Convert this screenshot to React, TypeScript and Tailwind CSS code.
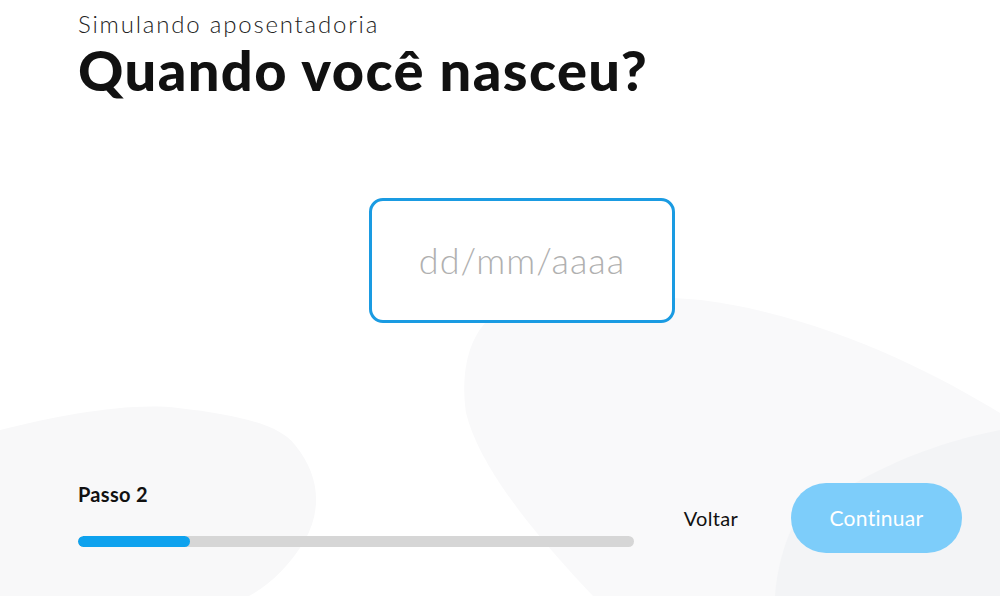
import React from "react";

export default function App() {
  return (
    <div className="relative w-[1000px] h-[596px] overflow-hidden bg-white" style={{ fontFamily: "Lato, 'Open Sans', sans-serif" }}>
      <svg className="absolute inset-0 w-[1000px] h-[596px]" viewBox="0 0 1000 596" aria-hidden="true">
        <path d="M485 323 C 520 300, 600 290, 701 300 C 820 315, 930 370, 1000 413 L 1000 596 L 593 596 C 540 540, 480 470, 466 413 C 460 370, 470 340, 485 323 Z" fill="#f9f9fa" />
        <path d="M0 430 C 60 415, 130 402, 178 408 C 240 415, 280 425, 295 445 C 320 475, 322 510, 305 540 C 290 565, 270 585, 249 596 L 0 596 Z" fill="#f8f8f9" />
        <path d="M1000 430 C 950 440, 910 455, 880 470 C 830 495, 800 515, 791 530 C 780 555, 776 580, 775 596 L 1000 596 Z" fill="#f3f4f6" />
      </svg>
      <div className="relative flex flex-col h-full">
        <div className="pl-[78px] pt-[10px]">
          <div className="text-[24px] leading-[28px] font-light text-[#222] tracking-[1.8px]">Simulando aposentadoria</div>
          <h1 className="mt-[1px] text-[56px] leading-[62px] font-black text-[#111] tracking-[1.4px]">Quando você nasceu?</h1>
        </div>
        <div className="flex mt-[97px] pl-[369px]">
          <div className="w-[306px] h-[125px] border-[3px] border-[#1a9be2] rounded-[14px] bg-white flex items-center justify-center">
            <span className="text-[36px] font-light text-[#b0b0b0] tracking-[1px] mt-[-1px]">dd/mm/aaaa</span>
          </div>
        </div>
        <div className="flex items-end pl-[78px] pr-[38px] mt-[159px]">
          <div className="flex flex-col w-[556px]">
            <div className="text-[20px] font-bold text-[#111] leading-[24px] tracking-[0.3px]">Passo 2</div>
            <div className="mt-[30px] h-[11px] rounded-full bg-[#d6d6d6] overflow-hidden">
              <div className="h-full w-[112px] rounded-full bg-[#0ea2ee]" />
            </div>
          </div>
          <div className="flex items-center ml-auto mb-[-6px]">
            <span className="text-[20px] text-[#111] mr-[53px] tracking-[0.3px]">Voltar</span>
            <div className="w-[171px] h-[70px] rounded-full bg-[#7dcdfa] flex items-center justify-center">
              <span className="text-[21px] text-white tracking-[0.3px]">Continuar</span>
            </div>
          </div>
        </div>
      </div>
    </div>
  );
}
